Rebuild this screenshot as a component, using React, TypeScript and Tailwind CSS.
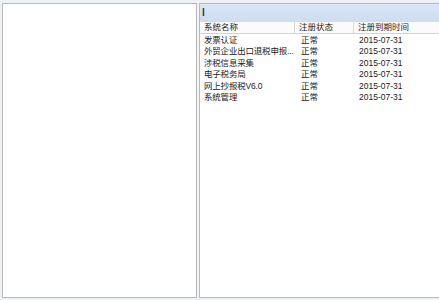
const rows = [
  ['发票认证', '正常', '2015-07-31'],
  ['外贸企业出口退税申报...', '正常', '2015-07-31'],
  ['涉税信息采集', '正常', '2015-07-31'],
  ['电子税务局', '正常', '2015-07-31'],
  ['网上抄报税V6.0', '正常', '2015-07-31'],
  ['系统管理', '正常', '2015-07-31'],
]

export default function App() {
  return (
    <div
      className="flex h-[300px] w-[439px] overflow-hidden bg-[#eef2f6] pl-[2px] pt-[3px] text-[8.5px] leading-none text-[#222]"
      style={{ fontFamily: '"Liberation Sans", "Noto Sans CJK SC", sans-serif' }}
    >
      <div className="h-[295px] w-[195px] shrink-0 border border-[#b9b9b9] bg-white" />
      <div className="h-[295px] w-[2px] shrink-0 bg-[#f4f4f4]" />
      <div className="flex h-[295px] flex-1 flex-col border border-r-0 border-[#b9b9b9] bg-white">
        <div className="flex h-[18px] shrink-0 items-center bg-gradient-to-b from-[#dbe7f6] to-[#cddcf0] pl-[2px]">
          <span className="text-[10px] font-bold text-[#333]">l</span>
        </div>
        <div className="flex h-[12px] shrink-0 items-center border-b border-[#d4d4d4] bg-[#fbfbfb]">
          <div className="flex h-full w-[95px] items-center border-r border-[#d8d8d8] pl-[4px]">系统名称</div>
          <div className="flex h-full w-[59px] items-center border-r border-[#d8d8d8] pl-[4px]">注册状态</div>
          <div className="flex h-full w-[58px] items-center pl-[4px]">注册到期时间</div>
        </div>
        <div>
          {rows.map((r) => (
            <div key={r[0]} className="flex h-[11.5px] items-center">
              <div className="w-[95px] overflow-hidden whitespace-nowrap pl-[4px] tracking-[-0.2px]">{r[0]}</div>
              <div className="w-[59px] pl-[6px]">{r[1]}</div>
              <div className="w-[58px] pl-[5px]">{r[2]}</div>
            </div>
          ))}
        </div>
      </div>
    </div>
  )
}
